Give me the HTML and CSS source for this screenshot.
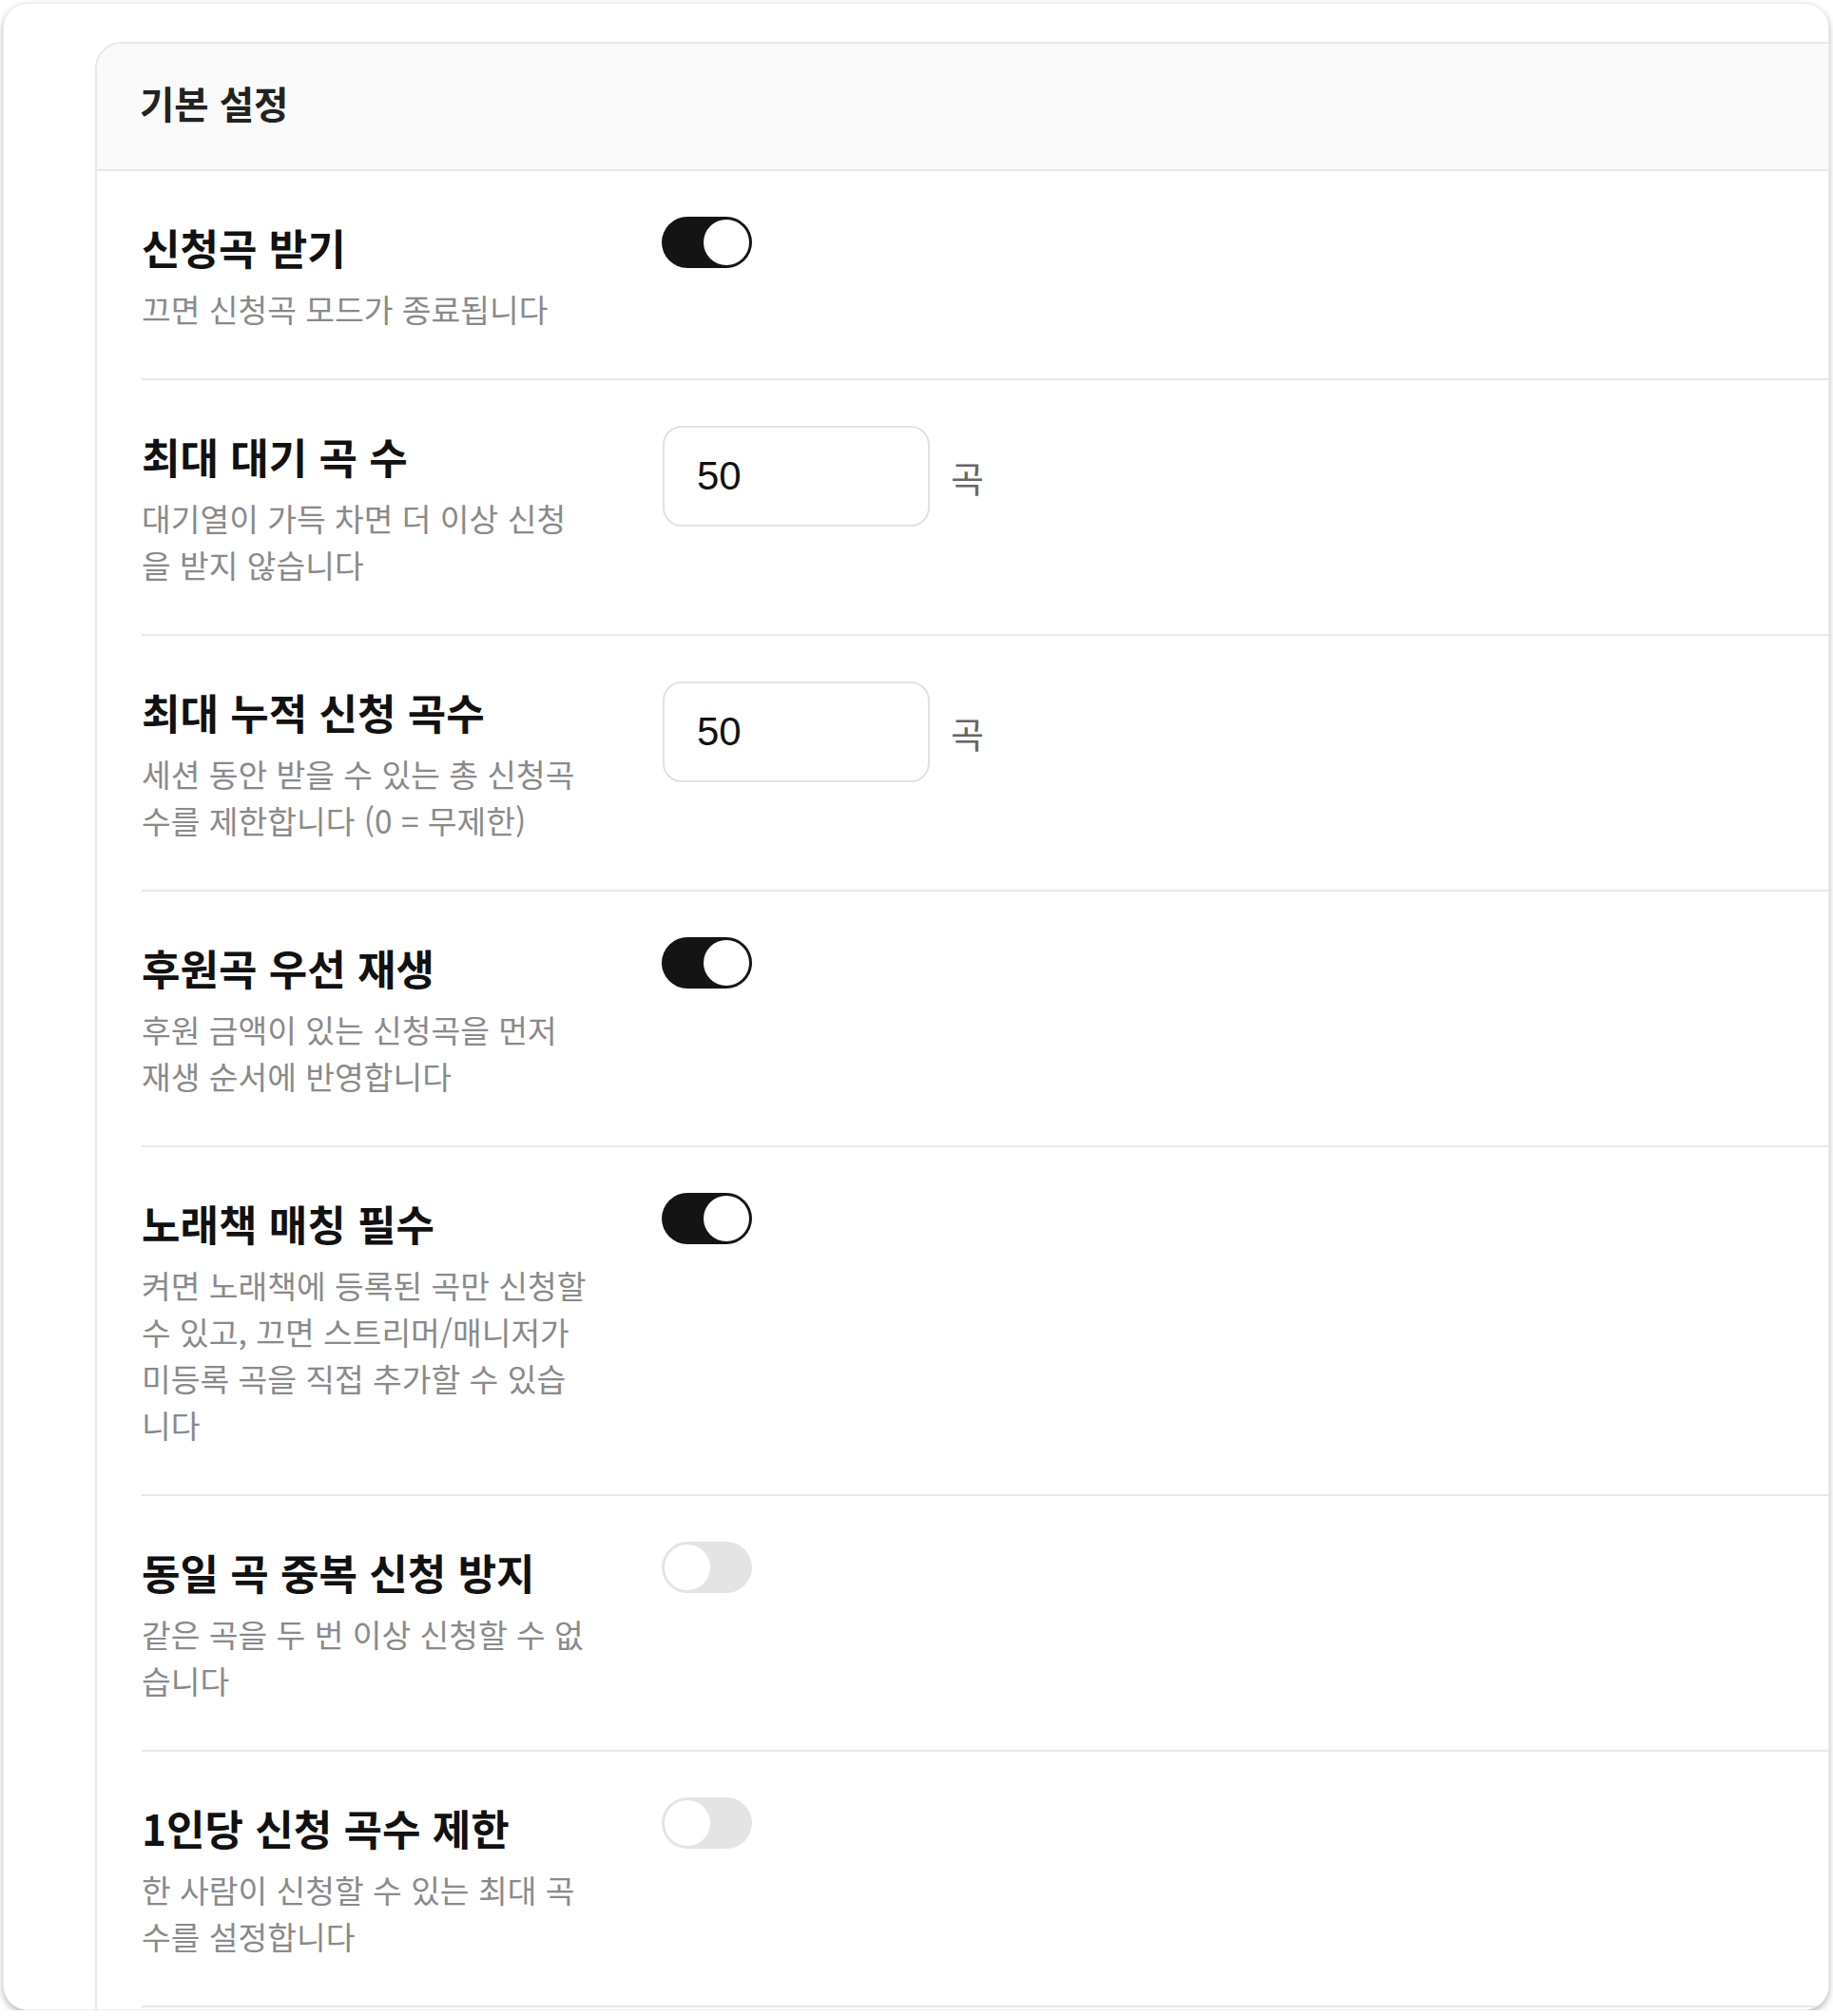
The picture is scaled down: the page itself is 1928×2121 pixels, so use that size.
FILE: index.html
```html
<!DOCTYPE html>
<html lang="ko">
<head>
    <meta charset="UTF-8">
    <title>신청곡 설정</title>
    <link rel="stylesheet" href="styles.css">
</head>
<body>
    <div class="window">
        <div class="card">
            <div class="card-header">기본 설정</div>

            <div class="rows">
                <div class="row">
                    <div class="info">
                        <div class="title">신청곡 받기</div>
                        <div class="desc">끄면 신청곡 모드가 종료됩니다</div>
                    </div>
                    <div class="control">
                        <label class="switch"><input type="checkbox" checked><span class="slider"></span></label>
                    </div>
                </div>

                <div class="row">
                    <div class="info">
                        <div class="title">최대 대기 곡 수</div>
                        <div class="desc">대기열이 가득 차면 더 이상 신청을 받지 않습니다</div>
                    </div>
                    <div class="control">
                        <input class="num" type="text" value="50">
                        <span class="unit">곡</span>
                    </div>
                </div>

                <div class="row">
                    <div class="info">
                        <div class="title">최대 누적 신청 곡수</div>
                        <div class="desc">세션 동안 받을 수 있는 총 신청곡 수를 제한합니다 (0 = 무제한)</div>
                    </div>
                    <div class="control">
                        <input class="num" type="text" value="50">
                        <span class="unit">곡</span>
                    </div>
                </div>

                <div class="row">
                    <div class="info">
                        <div class="title">후원곡 우선 재생</div>
                        <div class="desc">후원 금액이 있는 신청곡을 먼저 재생 순서에 반영합니다</div>
                    </div>
                    <div class="control">
                        <label class="switch"><input type="checkbox" checked><span class="slider"></span></label>
                    </div>
                </div>

                <div class="row">
                    <div class="info">
                        <div class="title">노래책 매칭 필수</div>
                        <div class="desc">켜면 노래책에 등록된 곡만 신청할 수 있고, 끄면 스트리머/매니저가 미등록 곡을 직접 추가할 수 있습니다</div>
                    </div>
                    <div class="control">
                        <label class="switch"><input type="checkbox" checked><span class="slider"></span></label>
                    </div>
                </div>

                <div class="row">
                    <div class="info">
                        <div class="title">동일 곡 중복 신청 방지</div>
                        <div class="desc">같은 곡을 두 번 이상 신청할 수 없습니다</div>
                    </div>
                    <div class="control">
                        <label class="switch"><input type="checkbox"><span class="slider"></span></label>
                    </div>
                </div>

                <div class="row">
                    <div class="info">
                        <div class="title">1인당 신청 곡수 제한</div>
                        <div class="desc">한 사람이 신청할 수 있는 최대 곡 수를 설정합니다</div>
                    </div>
                    <div class="control">
                        <label class="switch"><input type="checkbox"><span class="slider"></span></label>
                    </div>
                </div>
            </div>
        </div>
    </div>
</body>
</html>
```

FILE: styles.css
```css
body {
    margin: 0;
    padding: 3px 4px 0 3px;
    background: #fff;
    font-family: "Noto Sans CJK KR", "Noto Sans", sans-serif;
    color: #111;
}
.window {
    height: 2110px;
    background: #fff;
    border: 1px solid #ececec;
    border-radius: 26px;
    box-shadow: 0 3px 7px rgba(0,0,0,0.28);
    overflow: hidden;
}
.card {
    width: 2200px;
    margin: 40px 0 0 96px;
    padding-bottom: 60px;
    border: 2px solid #e8e8e8;
    border-radius: 28px;
    background: #fff;
}
.card-header {
    height: 134px;
    box-sizing: border-box;
    display: flex;
    align-items: center;
    padding: 0 45px 10px;
    background: #fafafa;
    border-bottom: 2px solid #e8e8e8;
    border-radius: 26px 26px 0 0;
    font-size: 39.5px;
    font-weight: 600;
    color: #222;
}
.rows {
    margin-left: 47px;
}
.row {
    display: flex;
    align-items: flex-start;
    gap: 77px;
    padding: 48px 0 49px;
    border-bottom: 2px solid #e8e8e8;
}
.info {
    width: 470px;
    flex-shrink: 0;
}
.title {
    font-size: 44px;
    line-height: 64px;
    font-weight: 600;
    color: #111;
}
.desc {
    margin-top: 8px;
    font-size: 33.4px;
    line-height: 49px;
    color: #8a8a8a;
}
.control {
    display: flex;
    align-items: center;
    gap: 22px;
}
.switch {
    position: relative;
    display: block;
    width: 95px;
    height: 54px;
}
.switch input {
    display: none;
}
.slider {
    position: absolute;
    inset: 0;
    background: #e4e4e4;
    border-radius: 27px;
}
.slider::after {
    content: "";
    position: absolute;
    top: 3px;
    left: 3px;
    width: 48px;
    height: 48px;
    border-radius: 50%;
    background: #fff;
}
.switch input:checked + .slider {
    background: #141414;
}
.switch input:checked + .slider::after {
    left: 44px;
}
.num {
    box-sizing: border-box;
    width: 281px;
    height: 106px;
    margin-left: 1px;
    padding: 0 34px;
    border: 2px solid #e2e2e2;
    border-radius: 20px;
    font-family: "Liberation Sans", Arial, sans-serif;
    font-size: 42px;
    color: #111;
    outline: none;
}
.unit {
    font-size: 38px;
    color: #666;
}
```
